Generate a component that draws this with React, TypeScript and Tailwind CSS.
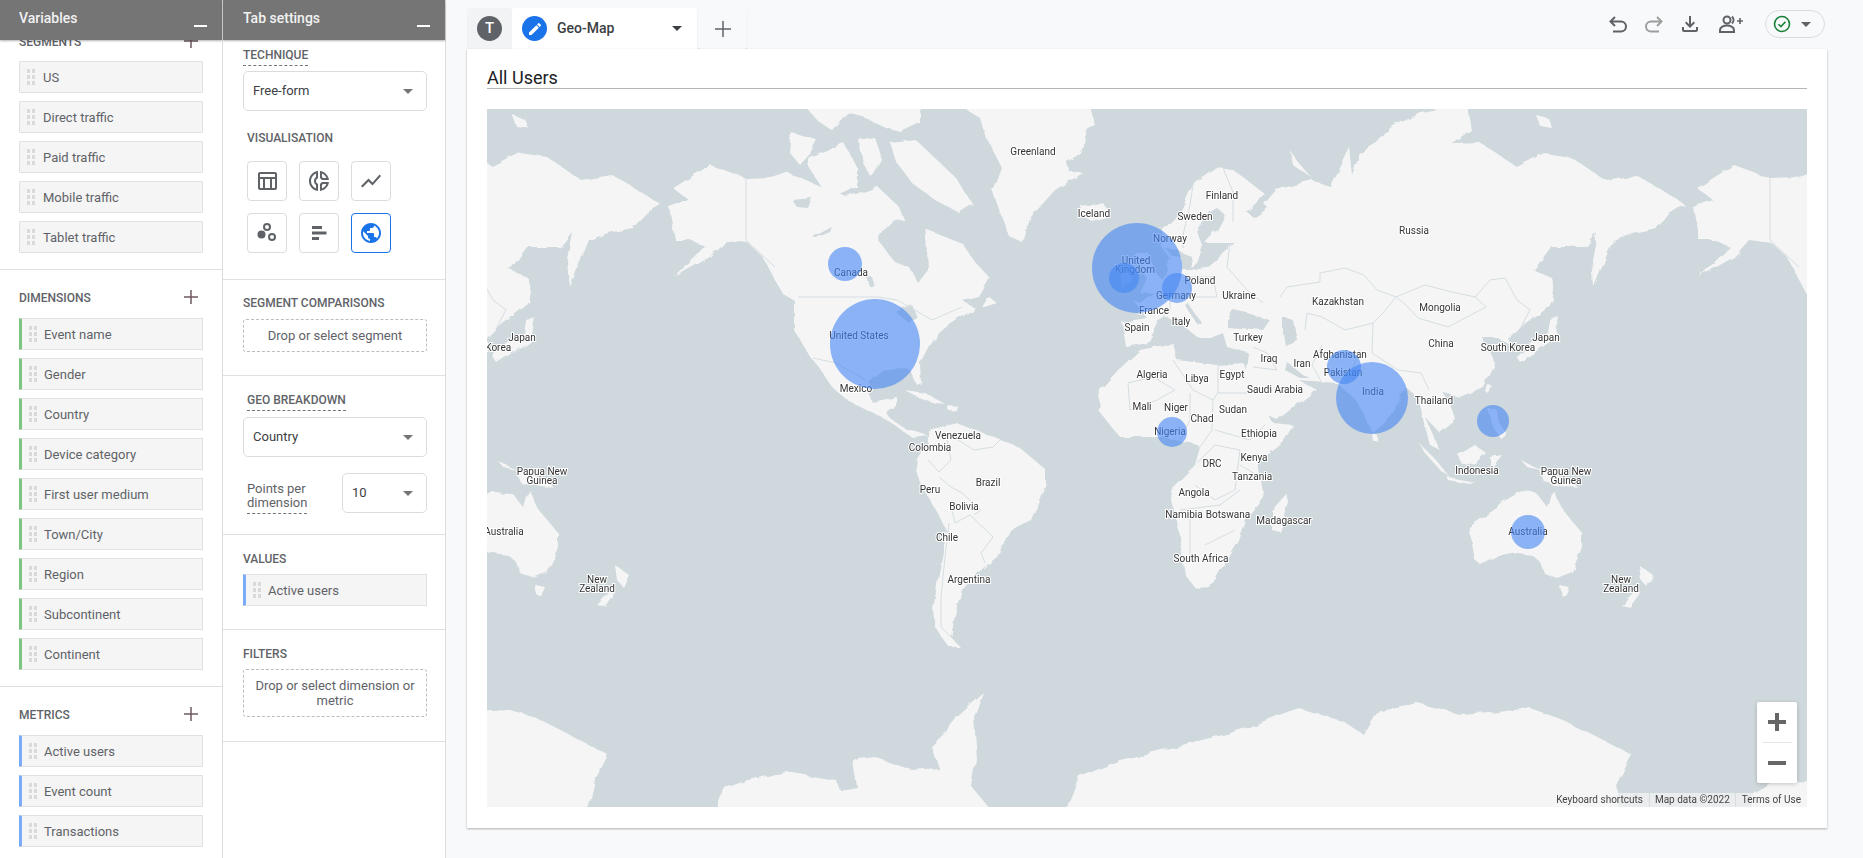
import { MdEdit, MdOutlineDonutSmall, MdOutlineFileDownload, MdOutlineTableChart, MdPublic, MdShowChart } from 'react-icons/md'

const segments = ['US', 'Direct traffic', 'Paid traffic', 'Mobile traffic', 'Tablet traffic']
const dimensions = ['Event name', 'Gender', 'Country', 'Device category', 'First user medium', 'Town/City', 'Region', 'Subcontinent', 'Continent']
const metrics = ['Active users', 'Event count', 'Transactions']

// everything on the map is in page pixels, viewBox starts at the map's corner
const land = [
  // north america
  '675,187 710,165 746,178 771,177 786,172 821,187 847,197 878,187 899,207 905,222 924,228 962,243 975,262 989,277 978,296 962,300 975,308 962,317 945,328 932,340 920,363 921,383 917,385 910,370 895,368 882,370 870,380 868,392 872,402 897,397 897,407 886,413 892,420 905,428 928,435 912,437 882,417 847,400 832,387 818,366 813,360 794,330 794,300 782,293 763,257 748,243 725,240 710,257 675,277 706,247 690,240 675,240 669,207 689,200 673,188',
  '989,297 997,303 981,308',
  '905,390 925,393 945,404 935,403 915,396',
  '948,405 958,406 957,411 948,410',
  // south america
  '928,430 958,423 993,437 1020,448 1046,470 1046,483 1031,520 1010,530 997,557 981,570 962,590 956,610 951,637 960,647 949,647 935,627 933,610 939,573 947,530 928,497 916,473 918,460 928,443',
  // arctic islands
  '800,100 920,100 920,123 901,132 886,128 863,117 847,113 832,130 817,120',
  '792,133 817,140 809,155 800,165 790,153',
  '809,157 844,143 857,167 857,187 836,197 822,188 809,167',
  '859,140 874,137 882,160 872,178 863,163',
  '891,143 916,140 955,177 972,203 958,212 935,200 912,183 897,163',
  // greenland, iceland
  '950,100 980,118 985,135 1002,168 993,192 1002,218 1010,237 1023,243 1030,218 1055,190 1083,173 1068,170 1067,162 1078,155 1085,145 1087,128 1095,125 1087,100',
  '1080,205 1090,207 1103,203 1109,212 1107,218 1093,222 1083,217 1079,212',
  // britain, ireland
  '1137,253 1148,253 1155,272 1165,283 1162,292 1140,293 1147,278 1137,265',
  '1120,272 1130,270 1132,283 1122,288',
  // eurasia
  '1126,347 1122,322 1147,318 1133,300 1140,303 1157,290 1165,275 1170,258 1160,245 1163,230 1180,212 1193,185 1217,168 1233,170 1263,192 1257,202 1247,212 1253,217 1276,190 1312,180 1330,186 1339,167 1349,147 1352,175 1360,153 1377,143 1391,127 1421,113 1467,105 1471,130 1452,143 1479,142 1517,167 1544,153 1571,157 1605,180 1636,175 1662,190 1685,205 1670,213 1657,228 1632,233 1613,240 1594,287 1592,260 1597,233 1586,247 1551,247 1534,270 1551,277 1551,303 1521,327 1509,340 1513,347 1498,338 1483,338 1494,363 1483,387 1460,397 1444,393 1456,420 1440,433 1425,417 1440,450 1430,445 1417,397 1406,387 1391,417 1373,433 1356,400 1337,383 1299,380 1317,390 1307,397 1277,420 1263,413 1245,377 1248,353 1227,347 1223,333 1213,337 1197,337 1185,327 1173,320 1167,317 1160,320 1148,343',
  // africa
  '1118,370 1140,350 1173,343 1177,360 1217,365 1243,363 1257,393 1273,423 1293,425 1283,443 1257,463 1263,497 1245,520 1238,540 1230,553 1215,580 1197,590 1185,575 1178,530 1170,490 1195,465 1200,447 1190,442 1150,437 1120,437 1098,410 1100,390',
  '1287,493 1289,503 1280,532 1272,530 1272,510',
  // asia islands
  '1521,363 1536,353 1555,340 1559,317 1550,320 1548,333 1532,343 1517,357',
  '1551,277 1555,292 1553,303 1549,300',
  '1488,385 1492,386 1489,394 1486,392',
  '1487,408 1495,408 1500,422 1506,434 1500,438 1492,424',
  '1373,434 1378,436 1378,442 1374,442',
  '1418,442 1433,457 1450,477 1440,470 1425,453',
  '1448,477 1475,482 1470,484 1448,480',
  '1458,455 1475,445 1486,453 1475,463 1463,465',
  '1490,457 1502,455 1494,465 1490,472',
  '1521,460 1536,468 1551,473 1574,483 1578,488 1559,485 1544,482 1540,470 1527,467',
  '1290,150 1296,160 1312,178 1300,170 1293,165',
  '1536,115 1548,118 1552,128 1540,126',
  // australia, new zealand
  '1498,503 1517,492 1536,493 1548,508 1553,490 1563,510 1582,533 1582,547 1572,572 1557,578 1544,573 1540,562 1532,555 1517,553 1498,557 1481,565 1475,560 1469,527 1494,510',
  '1559,585 1569,587 1565,596 1561,595',
  '1639,565 1653,575 1647,587 1641,580',
  '1636,590 1640,593 1630,607 1621,605',
]

// inland seas and lakes, painted over the land
const water = [
  '878,240 885,225 900,220 925,226 927,250 928,270 918,283 910,268 895,262',
  '897,313 912,305 918,318 908,322',
  '792,200 812,198 808,208 797,207',
  '813,237 832,227 830,232 816,238',
  '867,277 872,277 875,287 870,287',
  '1217,208 1210,212 1197,232 1202,245 1195,265 1190,270 1207,268 1217,260 1223,252 1235,243 1205,243 1217,230 1225,215',
  '1165,248 1177,250 1190,255 1192,270 1182,270 1180,256 1172,256',
  '1227,320 1233,310 1247,313 1270,320 1263,330 1240,328 1227,327',
  '1283,317 1293,320 1297,340 1285,345 1283,333',
  '1287,362 1303,375 1310,378 1300,378 1285,370',
  '1185,305 1188,303 1201,322 1198,325',
  '1247,212 1262,202 1268,208 1255,217',
]

const borders = [
  '798,297 878,297 897,300 932,320 962,307',
  '746,178 746,240 775,267',
  '813,358 836,363 866,380',
  '947,440 951,460 939,472 928,460',
  '939,477 951,487 962,493 981,510 974,515',
  '951,507 955,523 970,515 993,537 981,553 985,563',
  '949,523 945,557 941,597 941,627 951,637',
  '958,440 974,450 993,447 1000,440',
  '1280,297 1287,287 1320,282 1320,273 1345,268 1364,275 1377,290 1396,297 1383,313 1373,323 1345,330 1322,317 1307,313 1305,330',
  '1396,297 1425,285 1452,292 1475,297 1486,307 1467,317 1448,327 1418,318 1406,305 1396,297',
  '1475,297 1490,280 1505,278 1517,300 1530,310 1521,327',
  '1373,323 1372,353 1398,370 1421,373 1429,390',
  '1322,345 1312,365 1322,383',
  '1360,350 1350,375 1345,385',
  '1253,347 1267,353 1277,370 1253,367',
  '1230,243 1227,267 1247,290 1263,303',
  '1187,277 1213,277 1217,297 1193,297 1187,277',
  '1170,290 1170,310 1160,320',
  '1223,168 1233,192 1233,222',
  '1193,185 1190,205 1183,235 1183,248',
  '1218,365 1218,393 1213,400',
  '1218,393 1247,393',
  '1173,360 1193,390 1213,400',
  '1128,383 1130,410 1157,400 1175,390 1153,377 1128,383',
  '1190,393 1190,420 1178,445',
  '1213,400 1212,430 1200,447',
  '1215,430 1250,440 1265,425',
  '1197,463 1215,445 1240,450 1235,490 1215,500 1195,485',
  '1240,465 1262,478',
  '1180,510 1220,505 1240,490',
  '1190,510 1190,560',
  '1205,545 1235,530',
]

const antarctica = [
  '480,712 507,710 537,718 580,740 608,755 595,780 587,815 480,815',
  '713,815 725,788 748,780 786,772 836,780 840,790 857,787 853,760 874,757 912,770 939,768 932,747 947,733 955,717 983,692 974,717 977,760 972,787 995,815',
  '1069,815 1069,805 1080,777 1120,760 1170,748 1230,733 1249,727 1287,712 1299,708 1345,722 1364,735 1379,710 1418,703 1460,715 1490,713 1530,708 1563,720 1632,755 1617,783 1620,815',
  '1748,815 1753,793 1770,783 1815,782 1815,815',
]

const labels: [string, number, number][] = [
  ['Greenland', 1033, 151], ['Iceland', 1094, 213], ['Finland', 1222, 195], ['Sweden', 1195, 216], ['Norway', 1170, 238],
  ['United', 1136, 260], ['Kingdom', 1135, 269], ['Poland', 1200, 280], ['Germany', 1176, 295], ['Ukraine', 1239, 295],
  ['Kazakhstan', 1338, 301], ['Russia', 1414, 230], ['Mongolia', 1440, 307], ['China', 1441, 343], ['France', 1154, 310],
  ['Italy', 1181, 321], ['Spain', 1137, 327], ['Turkey', 1248, 337], ['Iraq', 1269, 358], ['Iran', 1302, 363],
  ['Afghanistan', 1340, 354], ['Pakistan', 1343, 372], ['India', 1373, 391], ['Thailand', 1434, 400], ['Algeria', 1152, 374],
  ['Libya', 1197, 378], ['Egypt', 1232, 374], ['Saudi Arabia', 1275, 389], ['Mali', 1142, 406], ['Niger', 1176, 407],
  ['Chad', 1202, 418], ['Sudan', 1233, 409], ['Nigeria', 1170, 431], ['Ethiopia', 1259, 433], ['DRC', 1212, 463],
  ['Kenya', 1254, 457], ['Tanzania', 1252, 476], ['Angola', 1194, 492], ['Namibia', 1184, 514], ['Botswana', 1228, 514],
  ['South Africa', 1201, 558], ['Madagascar', 1284, 520], ['Indonesia', 1477, 470], ['Papua New', 1566, 471], ['Guinea', 1566, 480],
  ['Australia', 1528, 531], ['New', 1621, 579], ['Zealand', 1621, 588], ['Japan', 1546, 337], ['South Korea', 1508, 347],
  ['Canada', 851, 272], ['United States', 859, 335], ['Mexico', 856, 388], ['Venezuela', 958, 435], ['Colombia', 930, 447],
  ['Peru', 930, 489], ['Brazil', 988, 482], ['Bolivia', 964, 506], ['Chile', 947, 537], ['Argentina', 969, 579],
  // the wrapped copy on the left
  ['Japan', 522, 337], ['South Korea', 484, 347], ['Papua New', 542, 471], ['Guinea', 542, 480], ['Australia', 504, 531],
  ['New', 597, 579], ['Zealand', 597, 588],
]

const bubbles: [number, number, number][] = [
  [1137, 268, 45], [1124, 278, 15], [1177, 288, 15], [1344, 367, 17], [1372, 398, 36],
  [1172, 432, 15], [1493, 421, 16], [845, 264, 17], [875, 344, 45], [1528, 532, 17],
]

function Grip() {
  return (
    <span className="grid grid-cols-2 gap-x-[2px] gap-y-[2px] shrink-0">
      {[0, 1, 2, 3, 4, 5].map(i => (
        <span key={i} className="w-[3px] h-[4px] bg-[#dadada]" />
      ))}
    </span>
  )
}

function Chip({ label, accent }: { label: string; accent?: 'green' | 'blue' }) {
  return (
    <div
      className={`h-8 flex items-center bg-[#f5f5f5] border border-[#e0e0e0] rounded-[1px] text-[13px] text-[#5f6368] ${
        accent === 'green'
          ? 'border-l-[3px] border-l-[#7cc47f] pl-[7px] gap-[7px]'
          : accent === 'blue'
            ? 'border-l-[3px] border-l-[#7baaf7] pl-[7px] gap-[7px]'
            : 'pl-[7px] gap-[8px]'
      }`}
    >
      <Grip />
      <span className="pt-[2px]">{label}</span>
    </div>
  )
}

function PlusIcon() {
  return (
    <svg width="16" height="16" viewBox="0 0 16 16" className="text-[#6d5a62]">
      <path d="M8 1v14M1 8h14" stroke="currentColor" strokeWidth="1.5" />
    </svg>
  )
}

function Heading({ label, action }: { label: string; action?: boolean }) {
  return (
    <div className="h-5 flex items-center justify-between pr-[4px] text-[12px] font-medium text-[#5f6368]">
      <span className="pt-[2px]">{label}</span>
      {action && <PlusIcon />}
    </div>
  )
}

function PanelHeader({ title, className = '' }: { title: string; className?: string }) {
  return (
    <div className={`relative z-10 h-10 shrink-0 bg-[#757575] shadow-[0_1px_2px_rgba(0,0,0,0.3)] pr-[15px] flex items-center justify-between text-white ${className}`}>
      <span className="text-[14px] font-medium opacity-90 -mt-[3px]">{title}</span>
      <span className="w-[13px] h-[2px] bg-white mt-[12px]" />
    </div>
  )
}

function Caret({ className = 'border-t-[#757575]' }: { className?: string }) {
  return <span className={`w-0 h-0 border-x-[5px] border-x-transparent border-t-[5px] ${className}`} />
}

function Select({ value, className = '' }: { value: string; className?: string }) {
  return (
    <div className={`h-10 flex items-center justify-between pl-[9px] pr-[13px] border border-[#dadce0] rounded-[5px] text-[13px] text-[#3c4043] ${className}`}>
      <span>{value}</span>
      <Caret />
    </div>
  )
}

function DropZone({ children, className = '' }: { children: React.ReactNode; className?: string }) {
  return (
    <div className={`flex items-center justify-center px-2 border border-dashed border-[#bdbdbd] rounded-[3px] text-[13px] leading-[15px] text-center text-[#5f6368] ${className}`}>
      {children}
    </div>
  )
}

function VisButton({ children, active }: { children: React.ReactNode; active?: boolean }) {
  return (
    <div className={`w-10 h-10 flex items-center justify-center rounded-[4px] border text-[#5f6368] ${active ? 'border-[#1a73e8]' : 'border-[#dadce0]'}`}>
      {children}
    </div>
  )
}

function WorldMap() {
  return (
    <svg viewBox="487 109 1320 698" className="block w-full h-[698px] bg-[#cfd8dc]">
      <defs>
        {/* roughens the straight polygon edges into a coast */}
        <filter id="coast" x="-2%" y="-2%" width="104%" height="104%">
          <feTurbulence type="fractalNoise" baseFrequency="0.06" numOctaves="3" seed="4" result="noise" />
          <feDisplacementMap in="SourceGraphic" in2="noise" scale="6" />
        </filter>
      </defs>
      <g filter="url(#coast)">
        {[-1024, 0, 1024].map(dx => (
          <g key={dx} transform={`translate(${dx} 0)`}>
            {land.map((p, i) => <polygon key={i} points={p} fill="#f5f5f5" />)}
            {water.map((p, i) => <polygon key={i} points={p} fill="#cfd8dc" />)}
          </g>
        ))}
        {antarctica.map((p, i) => <polygon key={i} points={p} fill="#f5f5f5" />)}
      </g>
      {[-1024, 0, 1024].map(dx => (
        <g key={dx} transform={`translate(${dx} 0)`}>
          {borders.map((p, i) => <polyline key={i} points={p} fill="none" stroke="#d5dde1" strokeWidth="1" />)}
        </g>
      ))}
      {labels.map(([text, x, y], i) => (
        <text
          key={i}
          x={x}
          y={y + 3.5}
          textAnchor="middle"
          fill="#333"
          stroke="#fff"
          strokeWidth="2"
          className="[paint-order:stroke] text-[10px] font-['Roboto',sans-serif]"
        >
          {text}
        </text>
      ))}
      {bubbles.map(([cx, cy, r], i) => (
        <circle key={i} cx={cx} cy={cy} r={r} fill="#4285f4" fillOpacity="0.6" />
      ))}
    </svg>
  )
}

export default function App() {
  return (
    <div className="flex h-screen overflow-hidden bg-[#f8f9fa] font-['Roboto',sans-serif]">
      {/* Variables */}
      <aside className="w-[223px] shrink-0 flex flex-col bg-white border-r border-[#dadce0] overflow-hidden">
        <PanelHeader title="Variables" className="pl-[19px]" />
        <div className="-mt-[9px] divide-y divide-[#e0e0e0]">
          <section className="pl-[19px] pr-[19px] pb-4">
            <Heading label="SEGMENTS" action />
            <div className="mt-[10px] flex flex-col gap-2">
              {segments.map(s => <Chip key={s} label={s} />)}
            </div>
          </section>
          <section className="pl-[19px] pr-[19px] pt-[17px] pb-[16px]">
            <Heading label="DIMENSIONS" action />
            <div className="mt-[11px] flex flex-col gap-2">
              {dimensions.map(s => <Chip key={s} label={s} accent="green" />)}
            </div>
          </section>
          <section className="pl-[19px] pr-[19px] pt-[17px]">
            <Heading label="METRICS" action />
            <div className="mt-[11px] flex flex-col gap-2">
              {metrics.map(s => <Chip key={s} label={s} accent="blue" />)}
            </div>
          </section>
        </div>
      </aside>

      {/* Tab settings */}
      <aside className="w-[223px] shrink-0 flex flex-col bg-white border-r border-[#dadce0]">
        <PanelHeader title="Tab settings" className="pl-5" />
        <div className="divide-y divide-[#e0e0e0] border-b border-[#e0e0e0]">
          <section className="pl-5 pr-[18px] pt-[5px] h-[240px]">
            <div className="h-5 pt-[2px] flex items-center">
              <span className="text-[12px] font-medium text-[#5f6368] border-b border-dashed border-[#757575] pb-[1px]">TECHNIQUE</span>
            </div>
            <Select value="Free-form" className="mt-[6px]" />
            <div className="pl-1 mt-[16px]">
              <div className="h-5 pt-[2px] flex items-center text-[12px] font-medium text-[#5f6368]">VISUALISATION</div>
              <div className="mt-[14px] grid grid-cols-[repeat(3,40px)] gap-3">
                <VisButton><MdOutlineTableChart size={24} /></VisButton>
                <VisButton><MdOutlineDonutSmall size={24} /></VisButton>
                <VisButton><MdShowChart size={24} /></VisButton>
                <VisButton>
                  <svg width="24" height="24" viewBox="0 0 24 24" fill="none">
                    <circle cx="6.5" cy="13.5" r="4" fill="currentColor" />
                    <circle cx="12" cy="6" r="3" stroke="currentColor" strokeWidth="2" />
                    <circle cx="17" cy="16" r="3" stroke="currentColor" strokeWidth="2" />
                  </svg>
                </VisButton>
                <VisButton>
                  <svg width="24" height="24" viewBox="0 0 24 24" fill="currentColor">
                    <rect x="5" y="5" width="10" height="3" />
                    <rect x="5" y="10.5" width="14.5" height="3" />
                    <rect x="5" y="16" width="7" height="3" />
                  </svg>
                </VisButton>
                <VisButton active><MdPublic size={24} className="text-[#1a73e8]" /></VisButton>
              </div>
            </div>
          </section>
          <section className="pl-5 pr-[18px] pt-[12px] h-[96px]">
            <Heading label="SEGMENT COMPARISONS" />
            <DropZone className="mt-[7px] h-[33px]">Drop or select segment</DropZone>
          </section>
          <section className="pl-5 pr-[18px] pt-[15px] h-[159px]">
            <div className="h-5 pl-1 flex items-center">
              <span className="text-[12px] font-medium text-[#5f6368] border-b border-dashed border-[#757575] pb-[1px]">GEO BREAKDOWN</span>
            </div>
            <Select value="Country" className="mt-[6px]" />
            <div className="mt-4 flex items-center justify-between">
              <span className="block mt-[6px] pl-1 text-[13px] leading-[14px] text-[#5f6368]">
                Points per<br />
                <span className="border-b border-dashed border-[#757575] pb-[3px]">dimension</span>
              </span>
              <Select value="10" className="w-[85px]" />
            </div>
          </section>
          <section className="pl-5 pr-[18px] pt-[13px] h-[95px]">
            <Heading label="VALUES" />
            <div className="mt-[6px]"><Chip label="Active users" accent="blue" /></div>
          </section>
          <section className="pl-5 pr-[18px] pt-[13px] h-[111px]">
            <Heading label="FILTERS" />
            <DropZone className="mt-[6px] h-[48px]">Drop or select dimension or metric</DropZone>
          </section>
        </div>
      </aside>

      {/* Main */}
      <main className="flex-1 min-w-0 pl-[21px] pr-9 flex flex-col">
        <div className="h-[49px] pt-2 shrink-0 flex items-stretch">
          <div className="w-[45px] flex items-center justify-center rounded-t-[4px] bg-[#f1f3f4]">
            <span className="w-[25px] h-[25px] rounded-full bg-[#5f6368] text-white text-[15px] font-medium flex items-center justify-center">T</span>
          </div>
          <div className="w-[185px] flex items-center pl-[10px] pr-[15px] rounded-t-[4px] bg-white">
            <span className="w-[25px] h-[25px] rounded-full bg-[#1a73e8] flex items-center justify-center text-white">
              <MdEdit size={16} />
            </span>
            <span className="ml-[10px] flex-1 text-[14px] font-medium text-[#3c4043]">Geo-Map</span>
            <Caret className="border-t-[#3c4043]" />
          </div>
          <div className="ml-[1px] w-[49px] flex items-center justify-center rounded-t-[4px] rounded-b-[2px] bg-[#f8f9fa] shadow-[0_1px_1px_rgba(0,0,0,0.2)]">
            <svg width="18" height="18" viewBox="0 0 18 18" className="text-[#5f6368]">
              <path d="M9 1v16M1 9h16" stroke="currentColor" strokeWidth="1.5" />
            </svg>
          </div>
          <div className="ml-auto mr-[2px] mt-[2px] self-start h-7 flex items-center text-[#5f6368]">
            <svg width="22" height="22" viewBox="0 0 22 22" fill="none" stroke="currentColor" strokeWidth="2">
              <path d="M8 4L3.5 8.5 8 13M3.5 8.5H14a5 5 0 0 1 0 10H6" />
            </svg>
            <svg width="22" height="22" viewBox="0 0 22 22" fill="none" stroke="#9e9e9e" strokeWidth="2" className="ml-[14px]">
              <path d="M14 4l4.5 4.5L14 13M18.500 8.500H8a5 5 0 0 0 0 10h8" />
            </svg>
            <MdOutlineFileDownload size={24} className="ml-[13px]" />
            <svg width="26" height="24" viewBox="0 0 26 24" fill="none" stroke="currentColor" strokeWidth="2" className="ml-[16px]">
              <circle cx="9" cy="8" r="3.5" />
              <path d="M2 20v-2c0-3 4-4.5 7-4.5s7 1.500 7 4.500v2z" />
              <path d="M14 4.500c2 2 2 5 0 7" />
              <path d="M22 6v6M19 9h6" strokeWidth="1.6" />
            </svg>
            <div className="ml-[21px] w-[60px] h-[28px] rounded-full border border-[#dadce0] flex items-center justify-between pl-[7px] pr-[13px]">
              <svg width="18" height="18" viewBox="0 0 18 18" fill="none" stroke="#188038" strokeWidth="1.6">
                <circle cx="9" cy="9" r="7.5" />
                <path d="M5.5 9.2l2.4 2.400 4.600-4.800" />
              </svg>
              <Caret className="border-t-[#5f6368]" />
            </div>
          </div>
        </div>

        <div className="h-[779px] shrink-0 bg-white shadow-[0_1px_2px_rgba(60,64,67,0.4)] px-5">
          <div className="h-[40px] flex items-end text-[18px] leading-[20px] text-[#202124] border-b border-[#b5b5b5]">All Users</div>
          <div className="relative mt-5 overflow-hidden">
            <WorldMap />
            <div className="absolute right-[10px] bottom-[24px] w-10 h-[81px] bg-white rounded-[2px] shadow-[0_1px_4px_rgba(0,0,0,0.2)] flex flex-col items-center text-[#666]">
              <svg width="20" height="40" viewBox="0 0 20 40">
                <path d="M10 11v18M1 20h18" stroke="currentColor" strokeWidth="4" />
              </svg>
              <span className="w-[30px] h-px bg-[#e6e6e6]" />
              <svg width="20" height="40" viewBox="0 0 20 40">
                <path d="M1 20h18" stroke="currentColor" strokeWidth="4" />
              </svg>
            </div>
            <div className="absolute right-0 bottom-0 h-[14px] flex items-center bg-[#f5f5f5]/70 text-[10px] text-[#444] leading-none">
              <span className="px-[6px] border-r border-[#d5dde1] h-full flex items-center">Keyboard shortcuts</span>
              <span className="px-[5px] border-r border-[#d5dde1] h-full flex items-center">Map data ©2022</span>
              <span className="px-[6px] h-full flex items-center">Terms of Use</span>
            </div>
          </div>
        </div>
      </main>
    </div>
  )
}
